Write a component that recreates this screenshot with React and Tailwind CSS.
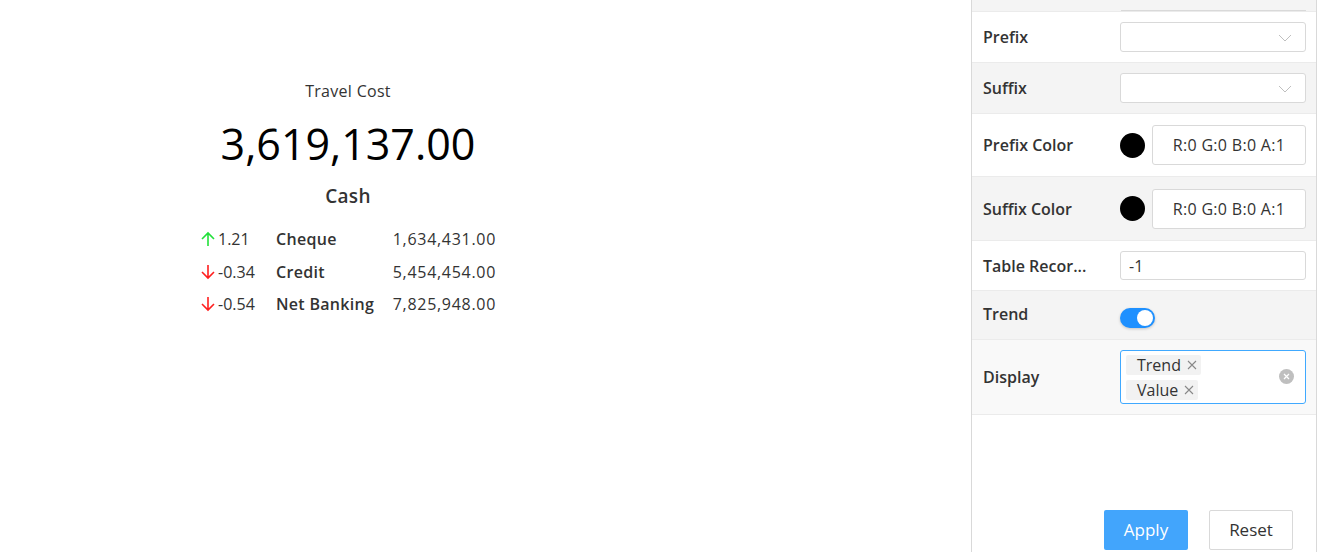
import React from "react";

const font = { fontFamily: "'Open Sans', Lato, sans-serif" };

function Chevron() {
  return (
    <svg width="14" height="8" viewBox="0 0 14 8" className="absolute right-[13px] top-[11px]">
      <path d="M1 1 L7 7 L13 1" fill="none" stroke="#bfbfbf" strokeWidth="1" />
    </svg>
  );
}

function Arrow({ up }) {
  const color = up ? "#22e03a" : "#ff1f1f";
  return (
    <svg width="16" height="16" viewBox="0 0 16 16" className="shrink-0">
      {up ? (
        <path d="M8 15 V2 M2 8 L8 2 L14 8" fill="none" stroke={color} strokeWidth="1.6" />
      ) : (
        <path d="M8 1 V14 M2 8 L8 14 L14 8" fill="none" stroke={color} strokeWidth="1.6" />
      )}
    </svg>
  );
}

function X() {
  return (
    <svg width="10" height="10" viewBox="0 0 10 10" className="ml-[6px]">
      <path d="M1 1 L9 9 M9 1 L1 9" stroke="#888" strokeWidth="1.1" />
    </svg>
  );
}

const rows = [
  { up: true, d: "1.21", name: "Cheque", v: "1,634,431.00" },
  { up: false, d: "-0.34", name: "Credit", v: "5,454,454.00" },
  { up: false, d: "-0.54", name: "Net Banking", v: "7,825,948.00" },
];

function Label({ children }) {
  return <div className="w-[137px] shrink-0 text-[16px] font-semibold leading-[22px] text-[#333]">{children}</div>;
}

export default function App() {
  return (
    <div className="flex h-[552px] w-[1321px] overflow-hidden bg-white" style={font}>
      <div className="w-[971px] shrink-0">
        <div className="flex w-[696px] flex-col items-center pt-[80px]">
          <div className="text-[16px] leading-[22px] tracking-[0.3px] text-[#333]">Travel Cost</div>
          <div className="mt-[17px] text-[43px] leading-[50px] text-black">3,619,137.00</div>
          <div className="mt-[15px] text-[19px] font-semibold leading-[24px] tracking-[0.3px] text-[#333]">Cash</div>
          <div className="mt-[15px] flex flex-col">
            {rows.map((r) => (
              <div key={r.name} className="flex h-[32.5px] items-center text-[16px] leading-[22px] text-[#333]">
                <div className="flex w-[76px] items-center gap-[2px]">
                  <Arrow up={r.up} />
                  <span>{r.d}</span>
                </div>
                <div className="w-[104px] font-semibold tracking-[0.3px]">{r.name}</div>
                <div className="w-[116px] text-right tracking-[0.7px]">{r.v}</div>
              </div>
            ))}
          </div>
        </div>
      </div>
      <div className="relative flex h-full w-[346px] shrink-0 flex-col border-x border-[#d9d9d9]">
        <div className="flex h-[12px] items-end justify-end border-b border-[#ebebeb] bg-[#f4f4f4] pr-[10px]">
          <div className="h-[1px] w-[185px] bg-[#d9d9d9]" />
        </div>
        <div className="flex h-[51px] items-center border-b border-[#ebebeb] bg-white pl-[11px] pr-[10px]">
          <Label>Prefix</Label>
          <div className="relative h-[30px] flex-1 rounded-[3px] border border-[#d9d9d9] bg-white">
            <Chevron />
          </div>
        </div>
        <div className="flex h-[51px] items-center border-b border-[#ebebeb] bg-[#f4f4f4] pl-[11px] pr-[10px]">
          <Label>Suffix</Label>
          <div className="relative h-[30px] flex-1 rounded-[3px] border border-[#d9d9d9] bg-white">
            <Chevron />
          </div>
        </div>
        <div className="flex h-[63px] items-center border-b border-[#ebebeb] bg-white pl-[11px] pr-[10px]">
          <Label>Prefix Color</Label>
          <div className="h-[25px] w-[25px] rounded-full bg-black" />
          <div className="ml-[7px] flex h-[40px] flex-1 items-center justify-center rounded-[3px] border border-[#d9d9d9] bg-white text-[16px] tracking-[0.3px] text-[#333]">
            R:0 G:0 B:0 A:1
          </div>
        </div>
        <div className="flex h-[64px] items-center border-b border-[#ebebeb] bg-[#f4f4f4] pl-[11px] pr-[10px]">
          <Label>Suffix Color</Label>
          <div className="h-[25px] w-[25px] rounded-full bg-black" />
          <div className="ml-[7px] flex h-[40px] flex-1 items-center justify-center rounded-[3px] border border-[#d9d9d9] bg-white text-[16px] tracking-[0.3px] text-[#333]">
            R:0 G:0 B:0 A:1
          </div>
        </div>
        <div className="flex h-[50px] items-center border-b border-[#ebebeb] bg-white pl-[11px] pr-[10px]">
          <Label>Table Recor...</Label>
          <div className="flex h-[29px] flex-1 items-center rounded-[3px] border border-[#d9d9d9] bg-white pl-[8px] text-[16px] text-[#333]">
            -1
          </div>
        </div>
        <div className="flex h-[49px] items-start border-b border-[#ebebeb] bg-[#f4f4f4] pl-[11px] pr-[10px] pt-[12px]">
          <Label>Trend</Label>
          <div className="relative mt-[5px] h-[20px] w-[35px] rounded-full bg-[#1e90ff] shadow-[0_1px_3px_rgba(0,0,0,0.2)]">
            <div className="absolute right-[2px] top-[2px] h-[16px] w-[16px] rounded-full bg-white" />
          </div>
        </div>
        <div className="flex h-[75px] items-center border-b border-[#ebebeb] bg-[#f9f9f9] pl-[11px] pr-[10px]">
          <Label>Display</Label>
          <div className="relative flex h-[54px] flex-1 flex-col justify-center gap-[5px] rounded-[3px] border border-[#40a9ff] bg-white pl-[5px]">
            <div className="flex h-[20px] w-fit items-center rounded-[2px] bg-[#f2f2f2] pl-[11px] pr-[4px] text-[16px] text-[#333]">
              Trend
              <X />
            </div>
            <div className="flex h-[20px] w-fit items-center rounded-[2px] bg-[#f2f2f2] pl-[11px] pr-[4px] text-[16px] text-[#333]">
              Value
              <X />
            </div>
            <div className="absolute right-[11px] top-[18px] flex h-[15px] w-[15px] items-center justify-center rounded-full bg-[#bfbfbf]">
              <svg width="7" height="7" viewBox="0 0 7 7">
                <path d="M1 1 L6 6 M6 1 L1 6" stroke="white" strokeWidth="1.3" />
              </svg>
            </div>
          </div>
        </div>
        <div className="flex-1" />
        <div className="flex items-center gap-[21px] pb-[2px] pl-[132px]">
          <button className="h-[40px] w-[84px] rounded-[2px] bg-[#42a5fc] text-[17px] text-white">Apply</button>
          <button className="h-[40px] w-[84px] rounded-[2px] border border-[#d9d9d9] bg-white text-[17px] text-[#333]">Reset</button>
        </div>
      </div>
    </div>
  );
}
